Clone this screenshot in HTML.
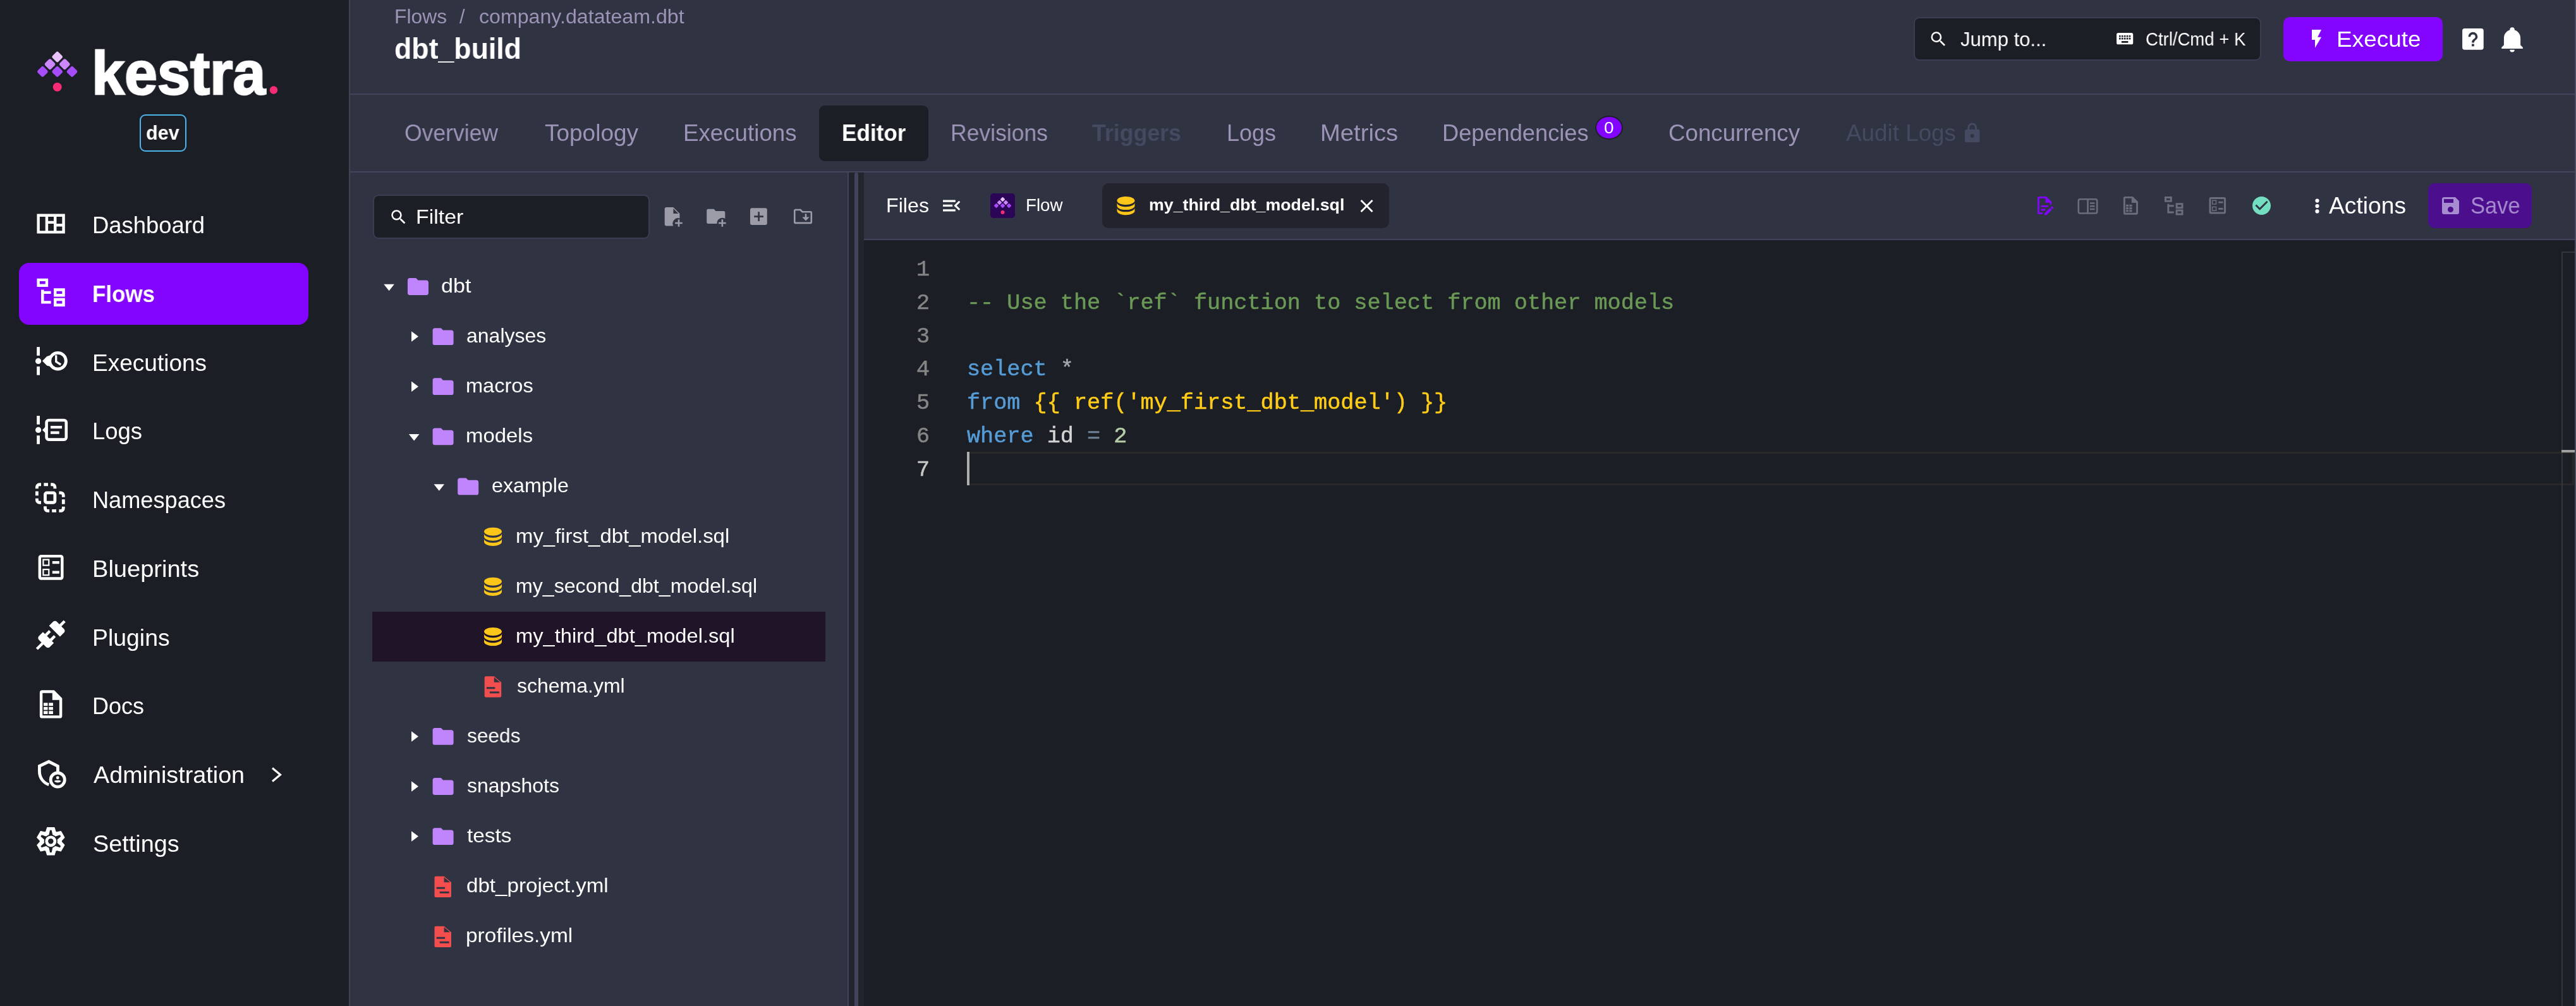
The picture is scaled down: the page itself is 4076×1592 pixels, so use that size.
<!DOCTYPE html>
<html><head><meta charset="utf-8">
<style>
html,body{margin:0;padding:0;width:4076px;height:1592px;overflow:hidden;background:#303342;font-family:"Liberation Sans",sans-serif;}
.a{position:absolute;box-sizing:border-box;}
.t{position:absolute;white-space:pre;line-height:1;transform-origin:0 0;font-family:"Liberation Sans",sans-serif;will-change:transform;}
.m{position:absolute;white-space:pre;line-height:1;font-family:"Liberation Mono",monospace;font-size:35.2px;color:#d4d4d4;will-change:transform;-webkit-text-stroke:0.5px currentColor;}
svg{position:absolute;overflow:visible;}
</style></head><body>
<!-- sidebar -->
<div class=a style="left:0;top:0;width:552px;height:1592px;background:#1c1e26"></div>
<div class=a style="left:552px;top:0;width:2px;height:1592px;background:#3f4358"></div>
<!-- header divider -->
<div class=a style="left:554px;top:148px;width:3522px;height:2px;background:#41445a"></div>
<!-- tabs divider -->
<div class=a style="left:554px;top:271px;width:3522px;height:2px;background:#41445a"></div>
<!-- Editor tab bg -->
<div class=a style="left:1296px;top:167px;width:173px;height:88px;background:#1c1e26;border-radius:9px"></div>
<!-- badge -->
<div class=a style="left:2524px;top:183px;width:44px;height:38px;background:#8405ff;border:2px solid #1e1f2a;border-radius:50%"></div>
<!-- jump box -->
<div class=a style="left:3028px;top:27px;width:550px;height:69px;background:#1c1e26;border:2px solid #3b3e52;border-radius:9px"></div>
<!-- execute -->
<div class=a style="left:3613px;top:27px;width:252px;height:70px;background:#8405ff;border-radius:10px"></div>
<!-- sidebar active -->
<div class=a style="left:30px;top:416px;width:458px;height:98px;background:#8405ff;border-radius:16px"></div>
<!-- dev badge -->
<div class=a style="left:221px;top:181px;width:74px;height:59px;border:2px solid #4cb6ec;border-radius:9px"></div>
<!-- filter box -->
<div class=a style="left:590px;top:308px;width:438px;height:70px;background:#1c1e26;border:2px solid #3b3e52;border-radius:9px"></div>
<!-- tree highlight -->
<div class=a style="left:589px;top:968px;width:717px;height:79px;background:#201429"></div>
<!-- splitter -->
<div class=a style="left:1341px;top:273px;width:2px;height:1319px;background:#41445a"></div>
<div class=a style="left:1343px;top:273px;width:24px;height:1319px;background:#22242e"></div>
<div class=a style="left:1352px;top:273px;width:6px;height:1319px;background:#41445a;border-radius:3px 3px 0 0"></div>
<!-- editor header -->
<div class=a style="left:1367px;top:378px;width:2709px;height:2px;background:#41445a"></div>
<div class=a style="left:1744px;top:290px;width:454px;height:71px;background:#22232d;border-radius:10px"></div>
<div class=a style="left:3842px;top:290px;width:164px;height:71px;background:#4b0e8c;border-radius:10px"></div>
<!-- code area -->
<div class=a style="left:1367px;top:380px;width:2709px;height:1212px;background:#1c1e26"></div>
<div class=a style="left:1530px;top:715px;width:2543px;height:53px;border:3px solid #282828"></div>
<div class=a style="left:1530px;top:715px;width:4px;height:53px;background:#aeafad"></div>
<div class=a style="left:4053px;top:398px;width:23px;height:1194px;border-left:2px solid #33363f;border-top:2px solid #33363f"></div>
<div class=a style="left:4053px;top:712px;width:23px;height:4px;background:#a0a0a0"></div>
<div class=a style="left:4074px;top:0;width:2px;height:1592px;background:#4a4c60"></div>
<svg width="4076" height="1592" style="left:0;top:0"><rect x="84.05" y="83.35" width="13.29" height="13.29" rx="2.6" fill="#e9c2fd" transform="rotate(45 90.70 90.00)"/><rect x="72.40" y="95.00" width="13.29" height="13.29" rx="2.6" fill="#cc88fb" transform="rotate(45 79.05 101.65)"/><rect x="95.70" y="95.00" width="13.29" height="13.29" rx="2.6" fill="#cc88fb" transform="rotate(45 102.35 101.65)"/><rect x="60.75" y="106.65" width="13.29" height="13.29" rx="2.6" fill="#a64cfb" transform="rotate(45 67.40 113.30)"/><rect x="84.05" y="106.65" width="13.29" height="13.29" rx="2.6" fill="#a64cfb" transform="rotate(45 90.70 113.30)"/><rect x="107.35" y="106.65" width="13.29" height="13.29" rx="2.6" fill="#a64cfb" transform="rotate(45 114.00 113.30)"/><circle cx="90.70" cy="137.76" r="7" fill="#f72c75"/>
<circle cx="433" cy="142.5" r="6.2" fill="#f72c75"/>
<path fill="#ffffff" fill-rule="evenodd" transform="translate(54.0,327.50) scale(2.217)" d="M2,5H22V19H2ZM4,7H8V17H4ZM10,7H14V10H10ZM10,12H14V17H10ZM16,7H20V12H16ZM16,14H20V17H16Z"/>
<path fill="#ffffff" fill-rule="evenodd" transform="translate(54.00,436.25) scale(2.2170,2.2170)" d="M12,13H7V18H12V20H5V10H7V11H12V13M8,4V6H4V4H8M10,2H2V8H10V2M20,11V13H16V11H20M22,9H14V15H22V9M20,18V20H16V18H20M22,16H14V22H22V16Z" />
<g fill="#fff"><rect x="58.2" y="549.1" width="4.8" height="13.7"/><circle cx="60.6" cy="571.4" r="4.6"/><rect x="58.2" y="580" width="4.8" height="13.6"/><path d="M67,571.2L74.2,564L79.5,562.3V580.1L74.2,578.4Z"/></g><circle cx="91.5" cy="571.2" r="12.85" fill="none" stroke="#fff" stroke-width="4.9"/><path d="M88.75,562.2V572.3L96.2,577" fill="none" stroke="#fff" stroke-width="3.3"/>
<g fill="#fff"><rect x="58.2" y="658" width="4.8" height="13.7"/><circle cx="60.6" cy="680.4" r="4.6"/><rect x="58.2" y="689.2" width="4.8" height="13.6"/><path d="M67,680.4L74.5,672.8V688Z"/><rect x="80" y="673.9" width="18.1" height="4.3"/><rect x="80" y="682.5" width="13.7" height="4.3"/></g><rect x="73.6" y="665" width="31.2" height="30.6" rx="3.5" fill="none" stroke="#fff" stroke-width="4.6"/>
<g transform="translate(0,0.25)" fill="none" stroke="#fff" stroke-width="4.8"><path d="M58.4,773.1V770.5A4,4 0 0,1 62.4,766.5H65M69.4,766.5H76M80.3,766.5H82.9A4,4 0 0,1 86.9,770.5V773.1M58.4,777.2V784M58.4,788.4V791A4,4 0 0,0 62.4,795H65"/><path d="M93.4,779.6H96.3A4,4 0 0,1 100.3,783.6V786.5M100.3,790V797.4M100.3,801.5V804.1A4,4 0 0,1 96.3,808.1H93.4M89,808.1H82.2M78.1,808.1H75.5A4,4 0 0,1 71.5,804.1V801"/><rect x="71.5" y="779.6" width="15.4" height="15.4" rx="2.5"/></g>
<path fill="#ffffff" fill-rule="evenodd" transform="translate(54.00,871.25) scale(2.2170,2.2170)" d="M13,9.5H18V7.5H13V9.5M13,16.5H18V14.5H13V16.5M19,3H5A2,2 0 0,0 3,5V19A2,2 0 0,0 5,21H19A2,2 0 0,0 21,19V5A2,2 0 0,0 19,3M19,19H5V5H19V19M6,11H11V6H6V11M7,7H10V10H7V7M6,18H11V13H6V18M7,14H10V17H7V14Z" />
<path fill="#ffffff" fill-rule="evenodd" transform="translate(53.70,978.50) scale(2.2170,2.2170)" d="M21.4 7.5C22.2 8.3 22.2 9.6 21.4 10.3L18.6 13.1L10.8 5.3L13.6 2.5C14.4 1.7 15.7 1.7 16.4 2.5L18.2 4.3L21.2 1.3L22.6 2.7L19.6 5.7L21.4 7.5M15.6 13.3L14.2 11.9L11.4 14.7L9.3 12.6L12.1 9.8L10.7 8.4L7.9 11.2L6.4 9.8L3.6 12.6C2.8 13.4 2.8 14.7 3.6 15.4L5.4 17.2L1.4 21.2L2.8 22.6L6.8 18.6L8.6 20.4C9.4 21.2 10.7 21.2 11.4 20.4L14.2 17.6L12.8 16.2L15.6 13.3Z" />
<g transform="translate(54.0,1087.85) scale(2.217)"><path fill="#fff" fill-rule="evenodd" d="M5.8,2H14.3L20,7.7V20.2A1.8,1.8 0 0,1 18.2,22H5.8A1.8,1.8 0 0,1 4,20.2V3.8A1.8,1.8 0 0,1 5.8,2ZM6,4V20H18V9H13V4Z"/><path fill="#fff" d="M6.8,11H9.7V13.2H6.8ZM10.5,11H13.5V13.2H10.5ZM6.8,13.9H9.7V16.1H6.8ZM10.5,13.9H13.5V16.1H10.5ZM6.8,16.9H9.7V19H6.8ZM10.5,16.9H13.5V19H10.5Z"/></g>
<g transform="translate(54.0,1197.50) scale(2.217)"><path fill="none" stroke="#fff" stroke-width="2.15" d="M10.5,20C7,18.8 3.8,15.4 3.8,10.6V6.7L10.5,3.5L16.9,6.7V10.8"/><circle cx="16.8" cy="16.5" r="5" fill="none" stroke="#fff" stroke-width="2.15"/><circle cx="16.8" cy="15" r="1.1" fill="#fff"/><path d="M14.3,17.4C15.3,16.6 18.3,16.6 19.3,17.4C18.5,18.8 15.1,18.8 14.3,17.4Z" fill="#fff"/></g>
<path fill="#fff" stroke="#fff" stroke-width="1.2" stroke-linejoin="round" d="M72.68,1316.24 L74.74,1309.61 L85.96,1309.61 L88.02,1316.24 L89.55,1317.13 L96.33,1315.60 L101.94,1325.31 L97.23,1330.42 L97.23,1332.18 L101.94,1337.29 L96.33,1347.00 L89.55,1345.47 L88.02,1346.36 L85.96,1352.99 L74.74,1352.99 L72.68,1346.36 L71.15,1345.47 L64.37,1347.00 L58.76,1337.29 L63.47,1332.18 L63.47,1330.42 L58.76,1325.31 L64.37,1315.60 L71.15,1317.13Z"/><path fill="#1c1e26" d="M77.15,1322.30L79.05,1313.70L81.65,1313.70L83.55,1322.30Z"/><path fill="#1c1e26" d="M86.54,1324.03L94.94,1321.37L96.24,1323.63L89.74,1329.57Z"/><path fill="#1c1e26" d="M89.74,1333.03L96.24,1338.97L94.94,1341.23L86.54,1338.57Z"/><path fill="#1c1e26" d="M83.55,1340.30L81.65,1348.90L79.05,1348.90L77.15,1340.30Z"/><path fill="#1c1e26" d="M74.16,1338.57L65.76,1341.23L64.46,1338.97L70.96,1333.03Z"/><path fill="#1c1e26" d="M70.96,1329.57L64.46,1323.63L65.76,1321.37L74.16,1324.03Z"/><circle cx="80.35" cy="1331.3" r="10.6" fill="#1c1e26"/><circle cx="80.35" cy="1331.3" r="8.9" fill="#fff"/><circle cx="80.35" cy="1331.3" r="4.2" fill="#1c1e26"/>
<path d="M431,1215.5L443.5,1226L431,1236.5" fill="none" stroke="#fff" stroke-width="3.2"/>
<path fill="#ffffff" fill-rule="evenodd" transform="translate(3051.60,46.40) scale(1.2900,1.2900)" d="M9.5,3A6.5,6.5 0 0,1 16,9.5C16,11.11 15.41,12.59 14.44,13.73L14.71,14H15.5L20.5,19L19,20.5L14,15.5V14.71L13.73,14.44C12.59,15.41 11.11,16 9.5,16A6.5,6.5 0 0,1 3,9.5A6.5,6.5 0 0,1 9.5,3M9.5,5C7,5 5,7 5,9.5C5,12 7,14 9.5,14C12,14 14,12 14,9.5C14,7 12,5 9.5,5Z" />
<path fill="#ffffff" fill-rule="evenodd" transform="translate(3346.40,45.40) scale(1.3100,1.3100)" d="M19,10H17V8H19M19,13H17V11H19M16,10H14V8H16M16,13H14V11H16M16,17H8V15H16M7,10H5V8H7M7,13H5V11H7M8,11H10V13H8M8,8H10V10H8M11,11H13V13H11M11,8H13V10H11M20,5H4C2.89,5 2,5.89 2,7V17A2,2 0 0,0 4,19H20A2,2 0 0,0 22,17V7C22,5.89 21.1,5 20,5Z" />
<path d="M3658,47H3673.1L3667.1,58.8H3673.1L3663,75.75V63H3658Z" fill="#fff"/>
<path fill="#ffffff" fill-rule="evenodd" transform="translate(3890.50,39.50) scale(1.8700,1.8700)" d="M11,18H13V16H11V18M12,6A4,4 0 0,0 8,10H10A2,2 0 0,1 12,8A2,2 0 0,1 14,10C14,12 11,11.75 11,15H13C13,12.75 16,12.5 16,10A4,4 0 0,0 12,6M5,3H19A2,2 0 0,1 21,5V19A2,2 0 0,1 19,21H5A2,2 0 0,1 3,19V5A2,2 0 0,1 5,3Z" />
<path fill="#ffffff" fill-rule="evenodd" transform="translate(3952.60,39.50) scale(1.8700,1.8700)" d="M21,19V20H3V19L5,17V11C5,7.9 7.03,5.17 10,4.29C10,4.19 10,4.1 10,4A2,2 0 0,1 12,2A2,2 0 0,1 14,4C14,4.1 14,4.19 14,4.29C16.97,5.17 19,7.9 19,11V17L21,19M14,21A2,2 0 0,1 12,23A2,2 0 0,1 10,21" />
<path fill="#464a60" fill-rule="evenodd" transform="translate(3103.00,193.00) scale(1.4700,1.4700)" d="M12,17A2,2 0 0,0 14,15C14,13.89 13.1,13 12,13A2,2 0 0,0 10,15A2,2 0 0,0 12,17M18,8A2,2 0 0,1 20,10V20A2,2 0 0,1 18,22H6A2,2 0 0,1 4,20V10C4,8.89 4.9,8 6,8H7V6A5,5 0 0,1 12,1A5,5 0 0,1 17,6V8H18M12,3A3,3 0 0,0 9,6V8H15V6A3,3 0 0,0 12,3Z" />
<path fill="#9c9ca8" fill-rule="evenodd" d="M1054,328H1065.4L1075.4,338V345.5A8.5,8.5 0 0,0 1065.3,357.4H1054A2.5,2.5 0 0,1 1051.7,355V330.5A2.5,2.5 0 0,1 1054,328ZM1065.4,330V338H1073.4Z"/>
<path d="M1068.2,353H1079.8M1074,347.2V358.8" stroke="#9c9ca8" stroke-width="2.6"/>
<path fill="#9c9ca8" d="M1120.5,330.7H1129.5L1132.5,334H1145A2.3,2.3 0 0,1 1147.3,336.3V346A8.5,8.5 0 0,0 1134.5,354H1120.5A2.3,2.3 0 0,1 1118.2,351.7V333A2.3,2.3 0 0,1 1120.5,330.7Z"/>
<path d="M1137,353H1148.7M1142.85,347.2V358.8" stroke="#9c9ca8" stroke-width="2.6"/>
<rect x="1187" y="329.2" width="26.8" height="26.8" rx="3" fill="#9c9ca8"/><path d="M1193.2,342.6H1208M1200.6,335.3V349.9" stroke="#303342" stroke-width="2.6"/>
<path fill="none" stroke="#9c9ca8" stroke-width="2.6" d="M1257.3,350.5V333A1.5,1.5 0 0,1 1258.8,332H1266.5L1269.5,335.2H1282.3A1.5,1.5 0 0,1 1283.8,336.7V351.4A1.5,1.5 0 0,1 1282.3,352.9H1258.8A1.5,1.5 0 0,1 1257.3,351.4Z"/>
<path d="M1275,338.4V346" stroke="#9c9ca8" stroke-width="2.6"/><path d="M1269.3,343.5H1280.8L1275,349.6Z" fill="#9c9ca8"/>
<path fill="#ffffff" fill-rule="evenodd" transform="translate(615.50,328.40) scale(1.2600,1.2600)" d="M9.5,3A6.5,6.5 0 0,1 16,9.5C16,11.11 15.41,12.59 14.44,13.73L14.71,14H15.5L20.5,19L19,20.5L14,15.5V14.71L13.73,14.44C12.59,15.41 11.11,16 9.5,16A6.5,6.5 0 0,1 3,9.5A6.5,6.5 0 0,1 9.5,3M9.5,5C7,5 5,7 5,9.5C5,12 7,14 9.5,14C12,14 14,12 14,9.5C14,7 12,5 9.5,5Z" />
<path fill="#fff" d="M607.30,449.80H623.90L615.60,460.30Z"/>
<path fill="#c084fc" fill-rule="evenodd" transform="translate(641.70,433.40) scale(1.6500,1.6750)" d="M10,4H4C2.89,4 2,4.89 2,6V18A2,2 0 0,0 4,20H20A2,2 0 0,0 22,18V8C22,6.89 21.1,6 20,6H12L10,4Z" />
<path fill="#fff" d="M651.00,524.35L662.00,532.60L651.00,540.85Z"/>
<path fill="#c084fc" fill-rule="evenodd" transform="translate(681.30,512.50) scale(1.6500,1.6750)" d="M10,4H4C2.89,4 2,4.89 2,6V18A2,2 0 0,0 4,20H20A2,2 0 0,0 22,18V8C22,6.89 21.1,6 20,6H12L10,4Z" />
<path fill="#fff" d="M651.00,603.45L662.00,611.70L651.00,619.95Z"/>
<path fill="#c084fc" fill-rule="evenodd" transform="translate(681.30,591.60) scale(1.6500,1.6750)" d="M10,4H4C2.89,4 2,4.89 2,6V18A2,2 0 0,0 4,20H20A2,2 0 0,0 22,18V8C22,6.89 21.1,6 20,6H12L10,4Z" />
<path fill="#fff" d="M646.90,687.10H663.50L655.20,697.60Z"/>
<path fill="#c084fc" fill-rule="evenodd" transform="translate(681.30,670.70) scale(1.6500,1.6750)" d="M10,4H4C2.89,4 2,4.89 2,6V18A2,2 0 0,0 4,20H20A2,2 0 0,0 22,18V8C22,6.89 21.1,6 20,6H12L10,4Z" />
<path fill="#fff" d="M686.50,766.20H703.10L694.80,776.70Z"/>
<path fill="#c084fc" fill-rule="evenodd" transform="translate(720.90,749.80) scale(1.6500,1.6750)" d="M10,4H4C2.89,4 2,4.89 2,6V18A2,2 0 0,0 4,20H20A2,2 0 0,0 22,18V8C22,6.89 21.1,6 20,6H12L10,4Z" />
<path fill="#ffc61a" fill-rule="evenodd" transform="translate(759.00,829.90) scale(1.7500,1.6200)" d="M12,3C7.58,3 4,4.79 4,7C4,9.21 7.58,11 12,11C16.42,11 20,9.21 20,7C20,4.79 16.42,3 12,3M4,9V12C4,14.21 7.58,16 12,16C16.42,16 20,14.21 20,12V9C20,11.21 16.42,13 12,13C7.58,13 4,11.21 4,9M4,14V17C4,19.21 7.58,21 12,21C16.42,21 20,19.21 20,17V14C20,16.21 16.42,18 12,18C7.58,18 4,16.21 4,14Z" />
<path fill="#ffc61a" fill-rule="evenodd" transform="translate(759.00,909.00) scale(1.7500,1.6200)" d="M12,3C7.58,3 4,4.79 4,7C4,9.21 7.58,11 12,11C16.42,11 20,9.21 20,7C20,4.79 16.42,3 12,3M4,9V12C4,14.21 7.58,16 12,16C16.42,16 20,14.21 20,12V9C20,11.21 16.42,13 12,13C7.58,13 4,11.21 4,9M4,14V17C4,19.21 7.58,21 12,21C16.42,21 20,19.21 20,17V14C20,16.21 16.42,18 12,18C7.58,18 4,16.21 4,14Z" />
<path fill="#ffc61a" fill-rule="evenodd" transform="translate(759.00,988.10) scale(1.7500,1.6200)" d="M12,3C7.58,3 4,4.79 4,7C4,9.21 7.58,11 12,11C16.42,11 20,9.21 20,7C20,4.79 16.42,3 12,3M4,9V12C4,14.21 7.58,16 12,16C16.42,16 20,14.21 20,12V9C20,11.21 16.42,13 12,13C7.58,13 4,11.21 4,9M4,14V17C4,19.21 7.58,21 12,21C16.42,21 20,19.21 20,17V14C20,16.21 16.42,18 12,18C7.58,18 4,16.21 4,14Z" />
<path fill="#f24e4e" fill-rule="evenodd" d="M768.7,1070.3H781.8000000000001L793.2,1079.8V1101.5A2,2 0 0,1 791.2,1103.5H768.7A2,2 0 0,1 766.7,1101.5V1072.3A2,2 0 0,1 768.7,1070.3Z M781.8000000000001,1071.8V1079.8H791.3000000000001Z M769.9000000000001,1087.3H783.3000000000001V1090.3H769.9000000000001Z M774.9000000000001,1094.3H789.8000000000001V1097.3H774.9000000000001Z"/>
<path fill="#fff" d="M651.00,1157.15L662.00,1165.40L651.00,1173.65Z"/>
<path fill="#c084fc" fill-rule="evenodd" transform="translate(681.30,1145.30) scale(1.6500,1.6750)" d="M10,4H4C2.89,4 2,4.89 2,6V18A2,2 0 0,0 4,20H20A2,2 0 0,0 22,18V8C22,6.89 21.1,6 20,6H12L10,4Z" />
<path fill="#fff" d="M651.00,1236.25L662.00,1244.50L651.00,1252.75Z"/>
<path fill="#c084fc" fill-rule="evenodd" transform="translate(681.30,1224.40) scale(1.6500,1.6750)" d="M10,4H4C2.89,4 2,4.89 2,6V18A2,2 0 0,0 4,20H20A2,2 0 0,0 22,18V8C22,6.89 21.1,6 20,6H12L10,4Z" />
<path fill="#fff" d="M651.00,1315.35L662.00,1323.60L651.00,1331.85Z"/>
<path fill="#c084fc" fill-rule="evenodd" transform="translate(681.30,1303.50) scale(1.6500,1.6750)" d="M10,4H4C2.89,4 2,4.89 2,6V18A2,2 0 0,0 4,20H20A2,2 0 0,0 22,18V8C22,6.89 21.1,6 20,6H12L10,4Z" />
<path fill="#f24e4e" fill-rule="evenodd" d="M689.5000000000001,1386.6999999999998H702.6000000000001L714.0000000000001,1396.1999999999998V1417.8999999999999A2,2 0 0,1 712.0000000000001,1419.8999999999999H689.5000000000001A2,2 0 0,1 687.5000000000001,1417.8999999999999V1388.6999999999998A2,2 0 0,1 689.5000000000001,1386.6999999999998Z M702.6000000000001,1388.1999999999998V1396.1999999999998H712.1000000000001Z M690.7000000000002,1403.6999999999998H704.1000000000001V1406.6999999999998H690.7000000000002Z M695.7000000000002,1410.6999999999998H710.6000000000001V1413.6999999999998H695.7000000000002Z"/>
<path fill="#f24e4e" fill-rule="evenodd" d="M689.5000000000001,1465.8H702.6000000000001L714.0000000000001,1475.3V1497.0A2,2 0 0,1 712.0000000000001,1499.0H689.5000000000001A2,2 0 0,1 687.5000000000001,1497.0V1467.8A2,2 0 0,1 689.5000000000001,1465.8Z M702.6000000000001,1467.3V1475.3H712.1000000000001Z M690.7000000000002,1482.8H704.1000000000001V1485.8H690.7000000000002Z M695.7000000000002,1489.8H710.6000000000001V1492.8H695.7000000000002Z"/>
<path d="M1492,318.2H1511.8M1492,325.4H1507.2M1492,332.9H1511.8" stroke="#fff" stroke-width="3.2"/>
<path d="M1518.3,318.75L1511.5,325.4L1518.3,332" fill="none" stroke="#fff" stroke-width="3"/>
<rect x="1567" y="306" width="39" height="39" rx="5" fill="#2b0657"/>
<rect x="1583.74" y="312.74" width="5.52" height="5.52" rx="1" fill="#e9c2fd" transform="rotate(45 1586.50 315.50)"/><rect x="1578.74" y="317.74" width="5.52" height="5.52" rx="1" fill="#cc88fb" transform="rotate(45 1581.50 320.50)"/><rect x="1588.74" y="317.74" width="5.52" height="5.52" rx="1" fill="#cc88fb" transform="rotate(45 1591.50 320.50)"/><rect x="1573.74" y="322.74" width="5.52" height="5.52" rx="1" fill="#a64cfb" transform="rotate(45 1576.50 325.50)"/><rect x="1583.74" y="322.74" width="5.52" height="5.52" rx="1" fill="#a64cfb" transform="rotate(45 1586.50 325.50)"/><rect x="1593.74" y="322.74" width="5.52" height="5.52" rx="1" fill="#a64cfb" transform="rotate(45 1596.50 325.50)"/><circle cx="1586.50" cy="336.00" r="3.0" fill="#f72c75"/>
<path fill="#ffc61a" fill-rule="evenodd" transform="translate(1760.50,306.20) scale(1.7500,1.6200)" d="M12,3C7.58,3 4,4.79 4,7C4,9.21 7.58,11 12,11C16.42,11 20,9.21 20,7C20,4.79 16.42,3 12,3M4,9V12C4,14.21 7.58,16 12,16C16.42,16 20,14.21 20,12V9C20,11.21 16.42,13 12,13C7.58,13 4,11.21 4,9M4,14V17C4,19.21 7.58,21 12,21C16.42,21 20,19.21 20,17V14C20,16.21 16.42,18 12,18C7.58,18 4,16.21 4,14Z" />
<path fill="#ffffff" fill-rule="evenodd" transform="translate(2145.40,308.85) scale(1.4300,1.4300)" d="M19,6.41L17.59,5L12,10.59L6.41,5L5,6.41L10.59,12L5,17.59L6.41,19L12,13.41L17.59,19L19,17.59L13.41,12L19,6.41Z" />
<path fill="#8405ff" fill-rule="evenodd" transform="translate(3218.40,308.20) scale(1.4000,1.4000)" d="M8,12H16V14H8V12M10,20H6V4H13V9H18V12.1L20,10.1V8L14,2H6A2,2 0 0,0 4,4V20A2,2 0 0,0 6,22H10V20M8,18H12.1L13,17.1V16H8V18M20.2,13C20.3,13 20.5,13.1 20.6,13.2L21.9,14.5C22.1,14.7 22.1,15.1 21.9,15.3L20.9,16.3L18.8,14.2L19.8,13.2C19.9,13.1 20,13 20.2,13M20.2,16.9L14.1,23H12V20.9L18.1,14.8L20.2,16.9Z" />
<g fill="none" stroke="#6b6d7a" stroke-width="2.6"><rect x="3288.8" y="315.3" width="29.4" height="22.2" rx="2.5"/><path d="M3303.5,315.3V337.5"/><path d="M3307,321.5H3314.5M3307,326.3H3314.5M3307,331H3314.5"/></g>
<g transform="translate(3354.1,308) scale(1.44)"><path fill="#6b6d7a" fill-rule="evenodd" d="M5.8,2H14.3L20,7.7V20.2A1.8,1.8 0 0,1 18.2,22H5.8A1.8,1.8 0 0,1 4,20.2V3.8A1.8,1.8 0 0,1 5.8,2ZM6,4V20H18V9H13V4Z"/><path fill="#6b6d7a" d="M6.8,11H9.7V13.2H6.8ZM10.5,11H13.5V13.2H10.5ZM6.8,13.9H9.7V16.1H6.8ZM10.5,13.9H13.5V16.1H10.5ZM6.8,16.9H9.7V19H6.8ZM10.5,16.9H13.5V19H10.5Z"/></g>
<path fill="#6b6d7a" fill-rule="evenodd" transform="translate(3422.00,308.00) scale(1.4750,1.4750)" d="M12,13H7V18H12V20H5V10H7V11H12V13M8,4V6H4V4H8M10,2H2V8H10V2M20,11V13H16V11H20M22,9H14V15H22V9M20,18V20H16V18H20M22,16H14V22H22V16Z" />
<path fill="#6b6d7a" fill-rule="evenodd" transform="translate(3491.10,307.60) scale(1.4700,1.4700)" d="M13,9.5H18V7.5H13V9.5M13,16.5H18V14.5H13V16.5M19,3H5A2,2 0 0,0 3,5V19A2,2 0 0,0 5,21H19A2,2 0 0,0 21,19V5A2,2 0 0,0 19,3M19,19H5V5H19V19M6,11H11V6H6V11M7,7H10V10H7V7M6,18H11V13H6V18M7,14H10V17H7V14Z" />
<path fill="#74dfc0" fill-rule="evenodd" transform="translate(3561.10,308.10) scale(1.4500,1.4500)" d="M12 2C6.5 2 2 6.5 2 12S6.5 22 12 22 22 17.5 22 12 17.5 2 12 2M10 17L5 12L6.41 10.59L10 14.17L17.59 6.58L19 8L10 17Z" />
<circle cx="3666.5" cy="317.6" r="3.1" fill="#fff"/>
<circle cx="3666.5" cy="326" r="3.1" fill="#fff"/>
<circle cx="3666.5" cy="334.4" r="3.1" fill="#fff"/>
<path fill="#a78bd0" fill-rule="evenodd" transform="translate(3859.50,307.50) scale(1.5000,1.5000)" d="M15,9H5V5H15M12,19A3,3 0 0,1 9,16A3,3 0 0,1 12,13A3,3 0 0,1 15,16A3,3 0 0,1 12,19M17,3H5C3.89,3 3,3.9 3,5V19A2,2 0 0,0 5,21H19A2,2 0 0,0 21,19V7L17,3Z" /></svg>
<span class=t style="left:623.95px;top:11.00px;font-size:31px;color:#9c94b7;font-weight:400;transform:scaleX(1.0261);">Flows</span>
<span class=t style="left:727.00px;top:11.00px;font-size:31px;color:#9c94b7;font-weight:400;">/</span>
<span class=t style="left:758.46px;top:11.00px;font-size:31px;color:#9c94b7;font-weight:400;transform:scaleX(1.0370);">company.datateam.dbt</span>
<span class=t style="left:624.03px;top:54.00px;font-size:46px;color:#ffffff;font-weight:700;transform:scaleX(0.9713);">dbt_build</span>
<span class=t style="left:640.01px;top:193.00px;font-size:36px;color:#9c94b7;font-weight:400;transform:scaleX(0.9865);">Overview</span>
<span class=t style="left:861.50px;top:193.00px;font-size:36px;color:#9c94b7;font-weight:400;transform:scaleX(1.0270);">Topology</span>
<span class=t style="left:1081.46px;top:193.00px;font-size:36px;color:#9c94b7;font-weight:400;transform:scaleX(1.0197);">Executions</span>
<span class=t style="left:1331.55px;top:193.00px;font-size:36px;color:#ffffff;font-weight:700;transform:scaleX(0.9757);">Editor</span>
<span class=t style="left:1504.03px;top:193.00px;font-size:36px;color:#9c94b7;font-weight:400;transform:scaleX(0.9866);">Revisions</span>
<span class=t style="left:1728.00px;top:193.00px;font-size:36px;color:#464a60;font-weight:700;transform:scaleX(0.9927);">Triggers</span>
<span class=t style="left:1940.50px;top:193.00px;font-size:36px;color:#9c94b7;font-weight:400;">Logs</span>
<span class=t style="left:2088.88px;top:193.00px;font-size:36px;color:#9c94b7;font-weight:400;transform:scaleX(1.0620);">Metrics</span>
<span class=t style="left:2282.49px;top:193.00px;font-size:36px;color:#9c94b7;font-weight:400;transform:scaleX(1.0059);">Dependencies</span>
<span class=t style="left:2639.98px;top:193.00px;font-size:36px;color:#9c94b7;font-weight:400;transform:scaleX(1.0193);">Concurrency</span>
<span class=t style="left:2921.00px;top:193.00px;font-size:36px;color:#464a60;font-weight:400;transform:scaleX(1.0229);">Audit Logs</span>
<span class=t style="left:2537.92px;top:189.00px;font-size:26px;color:#ffffff;font-weight:400;transform:scaleX(1.0769);">0</span>
<span class=t style="left:3102.00px;top:46.00px;font-size:32px;color:#ffffff;font-weight:400;transform:scaleX(0.9701);">Jump to...</span>
<span class=t style="left:3395.05px;top:48.00px;font-size:29px;color:#ffffff;font-weight:400;transform:scaleX(0.9493);">Ctrl/Cmd + K</span>
<span class=t style="left:3696.89px;top:43.75px;font-size:35px;color:#ffffff;font-weight:400;transform:scaleX(1.0569);">Execute</span>
<span class=t style="left:145.98px;top:339.00px;font-size:36px;color:#ffffff;font-weight:400;transform:scaleX(1.0111);">Dashboard</span>
<span class=t style="left:146.06px;top:447.75px;font-size:36px;color:#ffffff;font-weight:700;transform:scaleX(0.9699);">Flows</span>
<span class=t style="left:145.94px;top:556.50px;font-size:36px;color:#ffffff;font-weight:400;transform:scaleX(1.0283);">Executions</span>
<span class=t style="left:145.98px;top:665.25px;font-size:36px;color:#ffffff;font-weight:400;transform:scaleX(1.0125);">Logs</span>
<span class=t style="left:145.99px;top:774.00px;font-size:36px;color:#ffffff;font-weight:400;transform:scaleX(1.0044);">Namespaces</span>
<span class=t style="left:145.89px;top:882.75px;font-size:36px;color:#ffffff;font-weight:400;transform:scaleX(1.0568);">Blueprints</span>
<span class=t style="left:145.92px;top:991.50px;font-size:36px;color:#ffffff;font-weight:400;transform:scaleX(1.0385);">Plugins</span>
<span class=t style="left:146.00px;top:1100.25px;font-size:36px;color:#ffffff;font-weight:400;">Docs</span>
<span class=t style="left:148.00px;top:1209.00px;font-size:36px;color:#ffffff;font-weight:400;transform:scaleX(1.0483);">Administration</span>
<span class=t style="left:146.95px;top:1317.75px;font-size:36px;color:#ffffff;font-weight:400;transform:scaleX(1.0501);">Settings</span>
<span class=t style="left:145.16px;top:68.00px;font-size:96px;color:#ffffff;font-weight:700;transform:scaleX(0.9730);-webkit-text-stroke:2.5px #fff;">kestra</span>
<span class=t style="left:231.04px;top:194.00px;font-size:32px;color:#ffffff;font-weight:700;transform:scaleX(0.9569);">dev</span>
<span class=t style="left:658.38px;top:327.00px;font-size:32px;color:#ffffff;font-weight:400;transform:scaleX(1.0583);">Filter</span>
<span class=t style="left:698.43px;top:436.00px;font-size:32px;color:#ffffff;font-weight:400;transform:scaleX(1.0667);">dbt</span>
<span class=t style="left:738.10px;top:515.10px;font-size:32px;color:#ffffff;font-weight:400;">analyses</span>
<span class=t style="left:737.07px;top:594.20px;font-size:32px;color:#ffffff;font-weight:400;transform:scaleX(1.0166);">macros</span>
<span class=t style="left:737.04px;top:673.30px;font-size:32px;color:#ffffff;font-weight:400;transform:scaleX(1.0284);">models</span>
<span class=t style="left:777.69px;top:752.40px;font-size:32px;color:#ffffff;font-weight:400;transform:scaleX(1.0071);">example</span>
<span class=t style="left:816.24px;top:831.50px;font-size:32px;color:#ffffff;font-weight:400;transform:scaleX(1.0279);">my_first_dbt_model.sql</span>
<span class=t style="left:816.29px;top:910.60px;font-size:32px;color:#ffffff;font-weight:400;transform:scaleX(1.0038);">my_second_dbt_model.sql</span>
<span class=t style="left:816.26px;top:989.70px;font-size:32px;color:#ffffff;font-weight:400;transform:scaleX(1.0205);">my_third_dbt_model.sql</span>
<span class=t style="left:818.30px;top:1068.80px;font-size:32px;color:#ffffff;font-weight:400;">schema.yml</span>
<span class=t style="left:739.10px;top:1147.90px;font-size:32px;color:#ffffff;font-weight:400;transform:scaleX(0.9894);">seeds</span>
<span class=t style="left:739.10px;top:1227.00px;font-size:32px;color:#ffffff;font-weight:400;">snapshots</span>
<span class=t style="left:739.10px;top:1306.10px;font-size:32px;color:#ffffff;font-weight:400;transform:scaleX(1.0439);">tests</span>
<span class=t style="left:738.06px;top:1385.20px;font-size:32px;color:#ffffff;font-weight:400;transform:scaleX(1.0357);">dbt_project.yml</span>
<span class=t style="left:737.01px;top:1464.30px;font-size:32px;color:#ffffff;font-weight:400;transform:scaleX(1.0463);">profiles.yml</span>
<span class=t style="left:1401.99px;top:309.00px;font-size:32px;color:#ffffff;font-weight:400;transform:scaleX(1.0068);">Files</span>
<span class=t style="left:1622.95px;top:312.00px;font-size:27px;color:#ffffff;font-weight:400;transform:scaleX(1.0269);">Flow</span>
<span class=t style="left:1818.49px;top:311.25px;font-size:26.5px;color:#ffffff;font-weight:700;transform:scaleX(1.0102);">my_third_dbt_model.sql</span>
<span class=t style="left:3685.00px;top:308.00px;font-size:36px;color:#ffffff;font-weight:400;transform:scaleX(1.0337);">Actions</span>
<span class=t style="left:3909.04px;top:308.30px;font-size:36px;color:#a78bd0;font-weight:400;transform:scaleX(0.9584);">Save</span>
<span class=m style="left:1449.88px;top:409.80px;color:#858585">1</span>
<span class=m style="left:1449.88px;top:462.65px;color:#858585">2</span>
<span class=m style="left:1530px;top:462.65px"><span style="color:#6a9955">-- Use the `ref` function to select from other models</span></span>
<span class=m style="left:1449.88px;top:515.50px;color:#858585">3</span>
<span class=m style="left:1449.88px;top:568.35px;color:#858585">4</span>
<span class=m style="left:1530px;top:568.35px"><span style="color:#569cd6">select</span> <span style="color:#a5a8ad">*</span></span>
<span class=m style="left:1449.88px;top:621.20px;color:#858585">5</span>
<span class=m style="left:1530px;top:621.20px"><span style="color:#569cd6">from</span> <span style="color:#ffcc17">{{ ref('my_first_dbt_model') }}</span></span>
<span class=m style="left:1449.88px;top:674.05px;color:#858585">6</span>
<span class=m style="left:1530px;top:674.05px"><span style="color:#569cd6">where</span> <span style="color:#d4d4d4">id</span> <span style="color:#6e8196">=</span> <span style="color:#b5cea8">2</span></span>
<span class=m style="left:1449.88px;top:726.90px;color:#c6c6c6">7</span>
</body></html>
